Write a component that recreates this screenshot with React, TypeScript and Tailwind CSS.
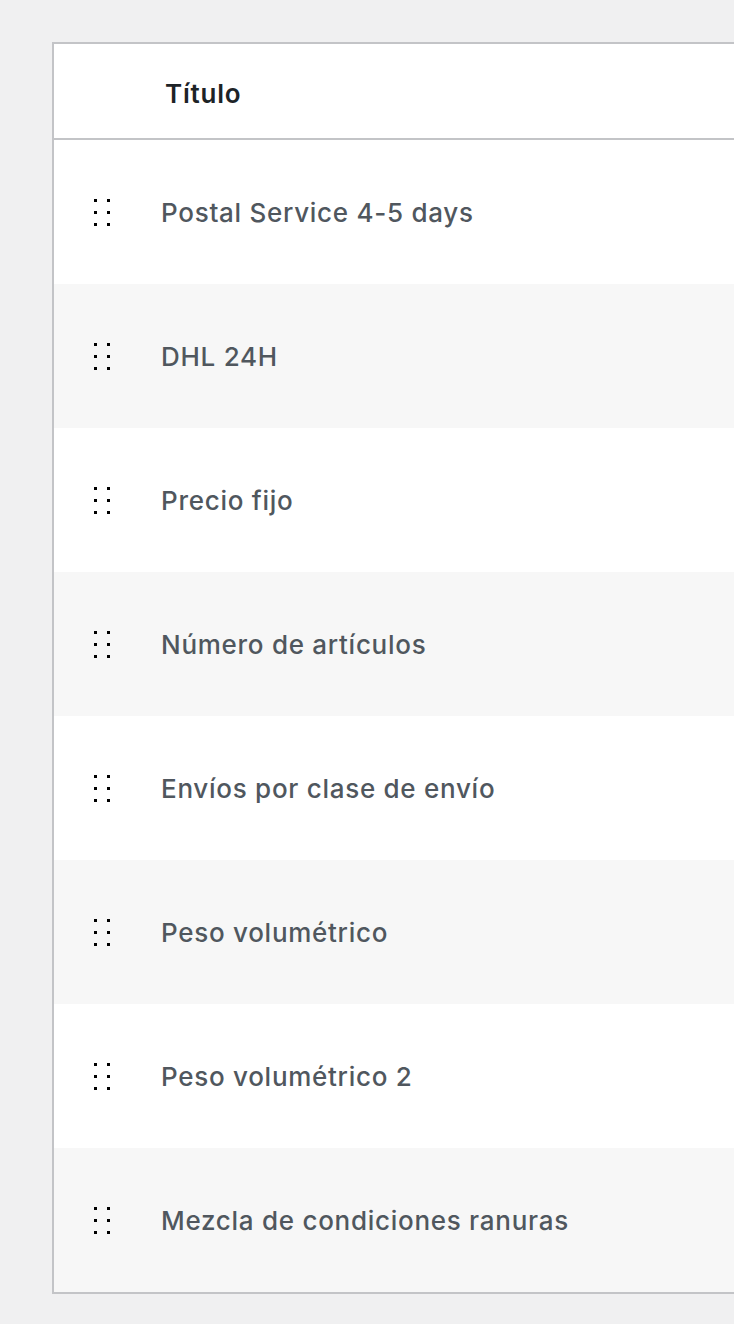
const ROWS = [
  "Postal Service 4-5 days",
  "DHL 24H",
  "Precio fijo",
  "Número de artículos",
  "Envíos por clase de envío",
  "Peso volumétrico",
  "Peso volumétrico 2",
  "Mezcla de condiciones ranuras",
];

function Grip() {
  return (
    <div className="grid grid-cols-2 gap-x-[10px] gap-y-[9px] w-[16px]">
      {Array.from({ length: 6 }).map((_, i) => (
        <span key={i} className="block w-[3px] h-[3px] bg-black" />
      ))}
    </div>
  );
}

export default function App() {
  return (
    <div
      className="min-h-[1324px] w-[734px] overflow-hidden bg-[#f0f0f1] pt-[42px] pl-[52px]"
      style={{ fontFamily: "Inter, 'Noto Sans', sans-serif" }}
    >
      <div className="w-[760px] border-2 border-[#c3c4c7] bg-white">
        {/* header */}
        <div className="flex items-center h-[96px] border-b-2 border-[#c3c4c7] pt-[4px]">
          <div className="w-[111px]" />
          <span className="text-[26px] font-semibold text-[#1d2327] tracking-[0.8px]">Título</span>
        </div>

        {ROWS.map((title, i) => (
          <div
            key={title}
            className={`flex items-center h-[144px] ${i % 2 === 1 ? "bg-[#f7f7f7]" : "bg-white"}`}
          >
            <div className="w-[107px] pl-[40px]">
              <Grip />
            </div>
            <span className="text-[26px] font-medium text-[#50575e] tracking-[0.72px]">{title}</span>
          </div>
        ))}
      </div>
    </div>
  );
}
